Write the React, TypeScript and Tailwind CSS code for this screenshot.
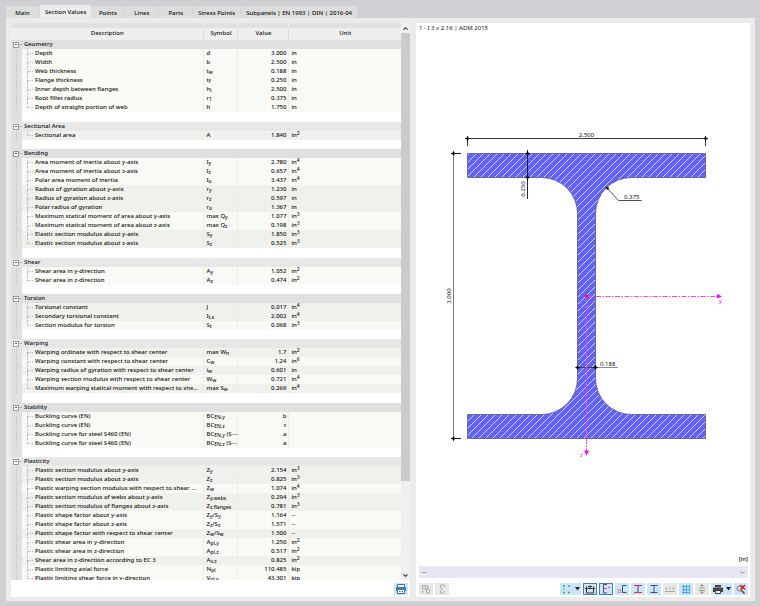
import React from "react";
import { ChevronDown, ChevronUp } from "lucide-react";

type Row = { name: string; symbol: string; value: string; unit: string; dark?: boolean };
type Group = { title: string; rows: Row[] };

const r = (name: string, symbol: string, value: string, unit: string, dark = false): Row => ({
  name,
  symbol,
  value,
  unit,
  dark,
});

const tabs = [
  "Main",
  "Section Values",
  "Points",
  "Lines",
  "Parts",
  "Stress Points",
  "Subpanels | EN 1993 | DIN | 2016-04",
];

const groups: Group[] = [
  {
    title: "Geometry",
    rows: [
      r("Depth", "d", "3.000", "in"),
      r("Width", "b", "2.500", "in"),
      r("Web thickness", "t_{w}", "0.188", "in"),
      r("Flange thickness", "t_{f}", "0.250", "in"),
      r("Inner depth between flanges", "h_{i}", "2.500", "in"),
      r("Root fillet radius", "r_{1}", "0.375", "in"),
      r("Depth of straight portion of web", "h", "1.750", "in"),
    ],
  },
  { title: "Sectional Area", rows: [r("Sectional area", "A", "1.840", "in^{2}", true)] },
  {
    title: "Bending",
    rows: [
      r("Area moment of inertia about y-axis", "I_{y}", "2.780", "in^{4}"),
      r("Area moment of inertia about z-axis", "I_{z}", "0.657", "in^{4}"),
      r("Polar area moment of inertia", "I_{o}", "3.437", "in^{4}"),
      r("Radius of gyration about y-axis", "r_{y}", "1.230", "in", true),
      r("Radius of gyration about z-axis", "r_{z}", "0.597", "in", true),
      r("Polar radius of gyration", "r_{o}", "1.367", "in", true),
      r("Maximum statical moment of area about y-axis", "max Q_{y}", "1.077", "in^{3}"),
      r("Maximum statical moment of area about z-axis", "max Q_{z}", "0.198", "in^{3}"),
      r("Elastic section modulus about y-axis", "S_{y}", "1.850", "in^{3}", true),
      r("Elastic section modulus about z-axis", "S_{z}", "0.525", "in^{3}", true),
    ],
  },
  {
    title: "Shear",
    rows: [
      r("Shear area in y-direction", "A_{y}", "1.052", "in^{2}"),
      r("Shear area in z-direction", "A_{z}", "0.474", "in^{2}"),
    ],
  },
  {
    title: "Torsion",
    rows: [
      r("Torsional constant", "J", "0.017", "in^{4}", true),
      r("Secondary torsional constant", "I_{t,s}", "2.002", "in^{4}", true),
      r("Section modulus for torsion", "S_{t}", "0.068", "in^{3}"),
    ],
  },
  {
    title: "Warping",
    rows: [
      r("Warping ordinate with respect to shear center", "max W_{n}", "1.7", "in^{2}", true),
      r("Warping constant with respect to shear center", "C_{w}", "1.24", "in^{6}"),
      r("Warping radius of gyration with respect to shear center", "i_{w}", "0.601", "in", true),
      r("Warping section modulus with respect to shear center", "W_{w}", "0.721", "in^{4}"),
      r("Maximum warping statical moment with respect to she...", "max S_{w}", "0.269", "in^{4}", true),
    ],
  },
  {
    title: "Stability",
    rows: [
      r("Buckling curve (EN)", "BC_{EN,y}", "b", ""),
      r("Buckling curve (EN)", "BC_{EN,z}", "c", ""),
      r("Buckling curve for steel S460 (EN)", "BC_{EN,y} (S⋯", "a", ""),
      r("Buckling curve for steel S460 (EN)", "BC_{EN,z} (S⋯", "a", ""),
    ],
  },
  {
    title: "Plasticity",
    rows: [
      r("Plastic section modulus about y-axis", "Z_{y}", "2.154", "in^{3}", true),
      r("Plastic section modulus about z-axis", "Z_{z}", "0.825", "in^{3}", true),
      r("Plastic warping section modulus with respect to shear ...", "Z_{w}", "1.074", "in^{4}"),
      r("Plastic section modulus of webs about y-axis", "Z_{y,webs}", "0.294", "in^{3}", true),
      r("Plastic section modulus of flanges about z-axis", "Z_{z,flanges}", "0.781", "in^{3}", true),
      r("Plastic shape factor about y-axis", "Z_{y}/S_{y}", "1.164", "--"),
      r("Plastic shape factor about z-axis", "Z_{z}/S_{z}", "1.571", "--"),
      r("Plastic shape factor with respect to shear center", "Z_{w}/S_{w}", "1.500", "--", true),
      r("Plastic shear area in y-direction", "A_{pl,y}", "1.250", "in^{2}"),
      r("Plastic shear area in z-direction", "A_{pl,z}", "0.517", "in^{2}"),
      r("Shear area in z-direction according to EC 3", "A_{v,z}", "0.825", "in^{2}", true),
      r("Plastic limiting axial force", "N_{pl}", "110.485", "kip"),
      r("Plastic limiting shear force in y-direction", "V_{pl,y}", "43.301", "kip"),
    ],
  },
];

/* Renders _{..} as a subscript and ^{..} as a superscript. */
function Formula({ text }: { text: string }) {
  return (
    <>
      {text.split(/([_^]\{[^}]*\})/).map((part, i) => {
        if (part.startsWith("_{"))
          return (
            <sub key={i} className="static align-[-1px] text-[5px] leading-none">
              {part.slice(2, -1)}
            </sub>
          );
        if (part.startsWith("^{"))
          return (
            <sup key={i} className="static align-[2px] text-[5px] leading-none">
              {part.slice(2, -1)}
            </sup>
          );
        return <React.Fragment key={i}>{part}</React.Fragment>;
      })}
    </>
  );
}

function GroupRows({ group, odd }: { group: Group; odd: boolean }) {
  const head = odd ? "bg-[#e7e7e7]" : "bg-[#e0e0e0]";
  return (
    <tbody>
      <tr className={head}>
        <td className="p-0">
          <div className="flex h-[9px] items-center pl-[2px]">
            <button
              aria-label={"Collapse " + group.title}
              className="flex h-[6px] w-[6px] items-center justify-center border border-[#9a9a9a] bg-white"
            >
              <span className="h-px w-[2px] bg-[#555]" />
            </button>
            <span className="h-px w-[3px] bg-[#b5b5b5]" />
          </div>
        </td>
        <th colSpan={4} scope="colgroup" className="p-0 pl-[2px] text-left font-medium">
          <div className="h-[9px] leading-[9px]">{group.title}</div>
        </th>
      </tr>
      {group.rows.map((row, i) => (
        <tr key={i} className={row.dark ? "bg-[#f0f1ec]" : "bg-[#f9faf5]"}>
          <td className="bg-[#e0e0e0] p-0">
            <div className="ml-[5px] h-[9px] border-l border-dotted border-[#c4c4c4]" />
          </td>
          <td className="border-r border-[#ecece8] p-0">
            <div className="flex h-[9px] pl-[5px] leading-[9px]">
              <div className="mr-[2px] w-[6px] shrink-0">
                <div className="h-[5px] border-b border-l border-dotted border-[#b9b9b9]" />
                {i < group.rows.length - 1 && (
                  <div className="h-[4px] border-l border-dotted border-[#b9b9b9]" />
                )}
              </div>
              <div className="min-w-0 whitespace-nowrap">{row.name}</div>
            </div>
          </td>
          <td className="border-r border-[#ecece8] p-0">
            <div className="h-[9px] pl-[2px] leading-[9px] whitespace-nowrap">
              <Formula text={row.symbol} />
            </div>
          </td>
          <td className="border-r border-[#ecece8] p-0">
            <div className="h-[9px] pr-[2px] text-right leading-[9px]">{row.value}</div>
          </td>
          <td className="p-0">
            <div className="h-[9px] pl-[2px] leading-[9px]">
              <Formula text={row.unit} />
            </div>
          </td>
        </tr>
      ))}
      <tr>
        <td className="bg-[#e0e0e0] p-0" />
        <td colSpan={4} className="bg-white p-0">
          <div className={group.rows.length > 4 ? "h-[10px]" : "h-[9px]"} />
        </td>
      </tr>
    </tbody>
  );
}

function SectionTable() {
  const cols = ["Symbol", "Value", "Unit"];
  return (
    <section className="flex min-h-0 min-w-0 flex-col bg-white">
      <div className="flex min-h-0 flex-1">
        <div className="min-h-0 min-w-0 flex-1 overflow-hidden">
          <table className="w-full table-fixed border-collapse">
            <colgroup>
              <col className="w-[11px]" />
              <col />
              <col className="w-[34px]" />
              <col className="w-[51px]" />
              <col className="w-[112px]" />
            </colgroup>
            <thead>
              <tr className="bg-[#e1e1e1]">
                <td colSpan={2} className="h-[5px] border-r border-[#efefef] p-0" />
                <td className="border-r border-[#efefef] p-0" />
                <td className="border-r border-[#efefef] p-0" />
                <td className="p-0" />
              </tr>
              <tr className="bg-[#efefef]">
                <th colSpan={2} className="border-r border-[#dedede] p-0 font-medium">
                  <div className="h-[12px] leading-[11px]">Description</div>
                </th>
                {cols.map((c) => (
                  <th key={c} className="border-r border-[#dedede] p-0 font-medium last:border-r-0">
                    <div className="h-[12px] leading-[11px]">{c}</div>
                  </th>
                ))}
              </tr>
            </thead>
            {groups.map((g, i) => (
              <GroupRows key={g.title} group={g} odd={i % 2 === 1} />
            ))}
          </table>
        </div>
        <div className="flex w-[9px] shrink-0 flex-col bg-[#f0f0f0] text-[#444]">
          <button aria-label="Scroll up" className="flex h-[10px] items-center justify-center">
            <ChevronUp size={7} strokeWidth={4} />
          </button>
          <div className="flex min-h-0 flex-1 flex-col">
            <div className="flex-[5] bg-[#cbcbcb]" />
            <div className="flex-1" />
          </div>
          <button aria-label="Scroll down" className="flex h-[10px] items-center justify-center">
            <ChevronDown size={7} strokeWidth={4} />
          </button>
        </div>
      </div>
      <div className="flex h-[17px] shrink-0 items-center justify-end pr-[2px]">
        <button aria-label="Export table" className="flex h-[12px] w-[14px] items-center justify-center bg-[#c9e3f8]">
          <svg width="10" height="10" viewBox="0 0 10 10">
            <path d="M1.500 0.500h7v3h-7z" fill="#e8f3fc" stroke="#4a6f93" />
            <path d="M0 3h10v4H0z" fill="#3a7fbd" />
            <path d="M1.500 5.500h7v4h-7z" fill="#fff" stroke="#4a6f93" />
            <path d="M3 7.500h1.500M5.500 7.500h1.500" stroke="#2f78b8" />
          </svg>
        </button>
      </div>
    </section>
  );
}

function Dot({ x, y }: { x: number; y: number }) {
  return (
    <g stroke="#000" strokeWidth="1">
      <path d={`M${x - 2.5} ${y}h5M${x} ${y - 2.5}v5`} strokeWidth="0.6" />
      <circle cx={x} cy={y} r="1" fill="#000" />
    </g>
  );
}

function Drawing() {
  return (
    <svg
      className="min-h-0 w-full flex-1 font-normal"
      viewBox="416 35 334 518"
      role="img"
      aria-label="Section I 3 x 2.16 with dimensions"
    >
      <defs>
        <pattern id="hatch" width="7" height="7" patternUnits="userSpaceOnUse">
          <rect width="7" height="7" fill="#6161fb" />
          <path d="M-1 1L1 -1M0 7L7 0M6 8L8 6" stroke="#e0e0ff" strokeWidth="0.9" />
        </pattern>
      </defs>
      <path
        d="M467.500 153.500H705.500V177.500H631.500A36 36 0 0 0 595.500 213.500V378.500A36 36 0 0 0 631.500 414.500H705.500V438.500H467.500V414.500H541.500A36 36 0 0 0 577.500 378.500V213.500A36 36 0 0 0 541.500 177.500H467.500Z"
        fill="url(#hatch)"
        stroke="#6d6d80"
        strokeWidth="1"
      />
      <g stroke="#222" strokeWidth="1" fill="none">
        <path d="M465 138.500H708M467.500 136V146M705.500 136V146" strokeWidth="0.9" />
        <path d="M453.500 151V441" stroke="#777" />
        <path d="M451 153.500H461M451 438.500H461" />
        <path d="M527.500 150V199" />
        <path d="M606.500 187.500L618.500 200.500H641.500" strokeWidth="0.8" />
        <path d="M577.500 367.500H595.500" stroke="#444" />
        <path d="M595.500 367.500H618" stroke="#888" />
      </g>
      <Dot x={467.5} y={138.5} />
      <Dot x={705.5} y={138.5} />
      <Dot x={453.5} y={153.5} />
      <Dot x={453.5} y={438.5} />
      <Dot x={527.5} y={153.5} />
      <Dot x={527.5} y={177.5} />
      <Dot x={577.5} y={367.5} />
      <Dot x={595.5} y={367.5} />
      <path d="M605.500 186.500l4 1.500l-2.500 2z" fill="#000" />
      <g stroke="#ff40ff" strokeWidth="1" fill="none" strokeDasharray="5 1.500 1.500 1.500">
        <path d="M586.500 296.500H718" />
        <path d="M586.500 296.500V451" />
      </g>
      <path d="M717 294l5 2.500l-5 2zM584 450.500h5l-2.500 5z" fill="#ff00ff" />
      <circle cx="586.500" cy="296" r="1.500" fill="#f01030" />
      <g fontSize="6" fill="#111">
        <text x="586.500" y="137" textAnchor="middle">2.500</text>
        <text x="624" y="199">0.375</text>
        <text x="600" y="366">0.188</text>
        <text transform="translate(525 189) rotate(-90)" textAnchor="middle">0.250</text>
        <text transform="translate(451 296) rotate(-90)" textAnchor="middle">3.000</text>
        <text x="719" y="303" fill="#ff00ff">y</text>
        <text x="580" y="457" fill="#ff00ff">z</text>
      </g>
    </svg>
  );
}

type Tool = { label: string; look: "off" | "on" | "pressed"; menu?: boolean; icon: React.ReactNode };

const tools: Tool[] = [
  {
    label: "Snap points",
    look: "on",
    menu: true,
    icon: <path d="M1 2h2M6 2h2M1 5h1M1 8.500h2M6 8.500h2" stroke="#35b04a" strokeWidth="1.500" />,
  },
  {
    label: "Dimensions",
    look: "pressed",
    icon: <path d="M0 4.500h10M1.500 4.500v-2M8.500 4.500v-2M5 4V1.500M3 2.500h4M1.500 5v4h7v-4" stroke="#333" fill="none" />,
  },
  {
    label: "Axes",
    look: "pressed",
    icon: (
      <g fill="none">
        <path d="M6 0.500H2.500v8.500H6" stroke="#3d4f80" />
        <path d="M3 4.500h3M7 3.500h2" stroke="#d553a6" />
      </g>
    ),
  },
  {
    label: "Principal axes",
    look: "on",
    icon: (
      <g fill="none">
        <path d="M9.500 1.500H5.500v7h4" stroke="#3d4f80" />
        <path d="M0.500 5.500h3M0.500 8.500h4M1.500 5v4M3.500 5v4" stroke="#d583b6" strokeWidth="0.800" />
      </g>
    ),
  },
  {
    label: "Stress points",
    look: "on",
    icon: (
      <g fill="none">
        <path d="M5 1v8" stroke="#445" />
        <path d="M1 1.500h8M1 8.500h8" stroke="#e03030" />
      </g>
    ),
  },
  {
    label: "Section outline",
    look: "on",
    icon: <path d="M1.500 1.500h7M5 1.500v7M1.500 8.500h7" stroke="#3d4f70" fill="none" />,
  },
  {
    label: "Ruler",
    look: "off",
    icon: <path d="M0 7.500h10M1.500 3v3M5 3v3M8.500 3v3" stroke="#aaa" fill="none" />,
  },
  {
    label: "Grid",
    look: "on",
    icon: <path d="M1 2.500h8M1 5.500h8M1 8.500h8M2.500 1v9M5.500 1v9M8.500 1v9" stroke="#3ba0ee" strokeWidth="0.900" fill="none" />,
  },
  {
    label: "Spacing",
    look: "off",
    icon: <path d="M5 0v3M3.500 1.500h3M2 4h6M2 6.500h6M5 7v3M3.500 8.500h3" stroke="#999" fill="none" />,
  },
  {
    label: "Print",
    look: "on",
    menu: true,
    icon: (
      <g>
        <path d="M2 1h6v2H2zM0 3.500h10V8H0z" fill="#444" />
        <path d="M2.500 6.500h5v3h-5z" fill="#eee" stroke="#444" />
      </g>
    ),
  },
  {
    label: "Reset zoom",
    look: "on",
    icon: (
      <g fill="none">
        <circle cx="3.500" cy="4.500" r="2.500" stroke="#777" />
        <path d="M5.500 6.500l3 3" stroke="#444" strokeWidth="1.500" />
        <path d="M4.500 1l4.500 4.500M9 1l-4.500 4.500" stroke="#f01020" strokeWidth="1.500" />
      </g>
    ),
  },
];

const looks = {
  off: "bg-[#e8e8e8]",
  on: "bg-[#cbe4f8]",
  pressed: "border border-[#4780b4] bg-[#cbe4f8]",
};

function ToolButton({ tool }: { tool: Tool }) {
  return (
    <button
      aria-label={tool.label}
      className={`flex h-[12px] shrink-0 items-center justify-center ${tool.menu ? "w-[21px] gap-[3px]" : "w-[14px]"} ${looks[tool.look]}`}
    >
      <svg width="10" height="10" viewBox="0 0 10 10" className="shrink-0">
        {tool.icon}
      </svg>
      {tool.menu && (
        <svg width="5" height="4" viewBox="0 0 5 4" className="shrink-0">
          <path d="M0 0h5L2.500 3.500z" fill="#222" />
        </svg>
      )}
    </button>
  );
}

function Preview() {
  const left: Tool[] = [
    {
      label: "Copy values",
      look: "off",
      icon: <path d="M1.500 1.500h3v3h-3zM1.500 6v3M4 6h2M5.500 5.500h3v3.500h-3zM6 1v3M8 3l-2 2" stroke="#aaa" fill="none" />,
    },
    {
      label: "Section parts",
      look: "off",
      icon: <path d="M7 3V1H3.500v2.500l2 1.500l-2 1.500V9H7V7" stroke="#b0b0b0" fill="none" />,
    },
  ];
  return (
    <section className="flex min-h-0 min-w-0 flex-col bg-white">
      <h2 className="h-[12px] shrink-0 px-[3px] leading-[11px] font-normal">1 - I 3 x 2.16 | ADM 2015</h2>
      <Drawing />
      <div className="shrink-0 px-[2px] pb-px text-right leading-[12px]">[in]</div>
      <div className="relative mr-[2px] ml-[3px] shrink-0">
        <select
          aria-label="Stress component"
          className="block h-[12px] w-full appearance-none bg-[#e7e7f3] px-[3px] leading-[12px] outline-none"
        >
          <option>--</option>
        </select>
        <ChevronDown size={7} strokeWidth={3} className="pointer-events-none absolute top-[3px] right-[2px] text-[#777]" />
      </div>
      <div className="flex h-[19px] shrink-0 items-center gap-[2px] pt-[2px] pr-[2px] pl-[3px]">
        {left.map((t) => (
          <ToolButton key={t.label} tool={t} />
        ))}
        <div className="flex-1" />
        {tools.map((t) => (
          <ToolButton key={t.label} tool={t} />
        ))}
      </div>
    </section>
  );
}

export default function App() {
  return (
    <div className="flex h-screen flex-col bg-[#cfcfd4] px-[5px] pt-[5px] pb-[5px] font-['Noto_Sans',sans-serif] text-[6px] font-medium text-[#111]">
      <nav className="flex h-[13px] shrink-0 items-end pl-px" role="tablist">
        {tabs.map((t, i) => (
          <button
            key={t}
            role="tab"
            aria-selected={i === 1}
            className={`min-w-[34px] px-[5px] pt-[2px] whitespace-nowrap ${i === 1 ? "h-[13px] bg-[#ebebeb]" : "h-[12px] border-r border-[#d6d6d6] bg-[#dddddd]"}`}
          >
            {t}
          </button>
        ))}
      </nav>
      <main className="ml-px grid min-h-0 flex-1 grid-cols-[43fr_36fr] grid-rows-[minmax(0,1fr)] gap-[6px] bg-[#ebebeb] px-[5px] pt-[5px] pb-[4px]">
        <SectionTable />
        <Preview />
      </main>
    </div>
  );
}
